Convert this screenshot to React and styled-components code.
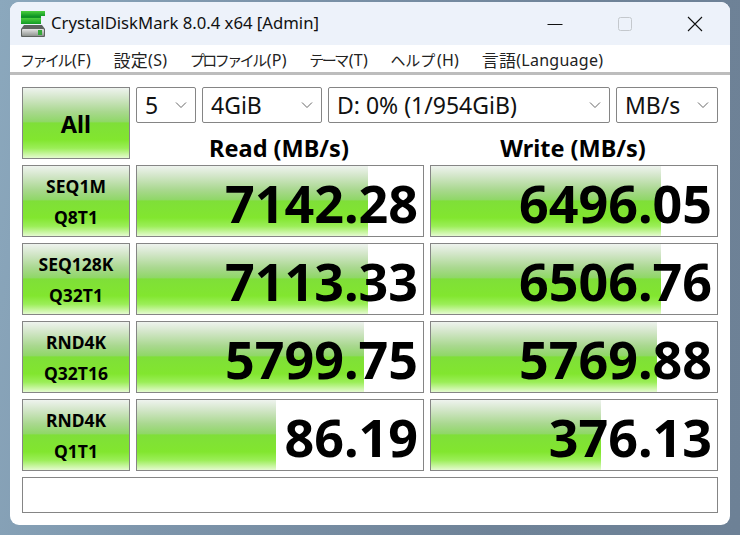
import React from "react";
import styled, { createGlobalStyle } from "styled-components";

const Global = createGlobalStyle`
  html, body { margin: 0; padding: 0; width: 740px; height: 535px; overflow: hidden; }
  body {
    background: linear-gradient(100deg, #8ba8bd 0%, #7d95ab 30%, #6f8398 70%, #6d8196 100%);
    font-family: "Noto Sans", "Noto Sans CJK JP", sans-serif;
  }
`;

const Desktop = styled.div`
  width: 740px;
  height: 535px;
  padding: 2px 10px 0;
  box-sizing: border-box;
`;
const Win = styled.div`
  width: 720px;
  height: 523px;
  background: #fff;
  border-radius: 9px;
  overflow: hidden;
  display: flex;
  flex-direction: column;
`;
const TitleBar = styled.div`
  height: 43px;
  background: #edf2fa;
  display: flex;
  align-items: center;
  padding-left: 11px;
  flex: none;
`;
const Title = styled.div`
  font-size: 16.7px;
  color: #111;
  margin-left: 6px;
  flex: 1;
  white-space: nowrap;
  position: relative;
  top: -1px;
`;
const WinBtn = styled.div`
  width: 70px;
  height: 43px;
  display: flex;
  align-items: center;
  justify-content: center;
  flex: none;
`;
const Menu = styled.div`
  height: 30px;
  background: #fff;
  border-bottom: 3px solid;
  border-image: linear-gradient(#ececec 0 66%, #bdbdbd 66%) 3;
  box-sizing: border-box;
  flex: none;
  display: flex;
  align-items: center;
  padding: 0 0 0 10px;
  color: #222;
  font-size: 16px;
  gap: 22.5px;
`;
const MenuItem = styled.span`
  white-space: nowrap;
  position: relative;
  top: 1px;
  display: flex;
  align-items: center;
  letter-spacing: 0.25px;
`;
const Kana = styled.span`
  font-family: "Noto Sans CJK JP", sans-serif;
  font-size: 15px;
  font-weight: 400;
  letter-spacing: ${(p) => p.$ls}px;
  margin-right: 2px;
`;
const Kanji = styled.span`
  font-family: "Noto Sans CJK JP", sans-serif;
  font-size: 17px;
  font-weight: 400;
  letter-spacing: 0.3px;
`;
const Body = styled.div`
  display: grid;
  grid-template-columns: 108px 288px 288px;
  column-gap: 6px;
  row-gap: 6px;
  padding: 12px 12px 0;
  grid-template-rows: 72px 72px 72px 72px 72px;
`;
const fill = `linear-gradient(180deg,
  #eef3ee 0%, #d3e6c9 14%, #a9d88f 34%, #90d768 48%, #7fdf38 50%, #82e62f 74%, #9bee58 86%, #cbf6a5 95%, #e4fbd0 100%)`;
const AllBtn = styled.div`
  background: ${fill};
  border: 1px solid #858585;
  box-sizing: border-box;
  display: flex;
  align-items: center;
  justify-content: center;
  font-weight: 700;
  font-size: 23.5px;
  color: #000;
  padding-top: 2px;
`;
const TopRight = styled.div`
  grid-column: 2 / 4;
  display: flex;
  flex-direction: column;
`;
const Selects = styled.div`
  display: flex;
  gap: 6px;
  height: 36px;
`;
const Sel = styled.div`
  width: ${(p) => p.$w}px;
  height: 36px;
  box-sizing: border-box;
  border: 1px solid #858585;
  border-radius: 2px;
  background: #fff;
  display: flex;
  align-items: center;
  justify-content: space-between;
  padding: 0 8px;
  font-size: 23px;
  color: #111;
  white-space: nowrap;
`;
const Heads = styled.div`
  display: grid;
  grid-template-columns: 288px 288px;
  column-gap: 6px;
  height: 36px;
`;
const Head = styled.div`
  font-weight: 700;
  font-size: 23.5px;
  color: #000;
  text-align: center;
  line-height: 50px;
  height: 36px;
  white-space: nowrap;
  position: relative;
  left: -1px;
`;
const LabelCell = styled.div`
  background: ${fill};
  border: 1px solid #858585;
  box-sizing: border-box;
  display: flex;
  flex-direction: column;
  align-items: center;
  justify-content: center;
  font-weight: 700;
  font-size: 17.5px;
  line-height: 30.5px;
  color: #000;
  padding-top: 1px;
`;
const Meter = styled.div`
  position: relative;
  border: 1px solid #858585;
  box-sizing: border-box;
  background: #fff;
  display: flex;
  align-items: center;
  justify-content: flex-end;
  padding-right: 5px;
  font-weight: 700;
  font-size: 52px;
  color: #000;
`;
const MeterFill = styled.div`
  position: absolute;
  left: 0;
  top: 0;
  bottom: 0;
  background: ${fill};
`;
const MeterText = styled.span`
  position: relative;
  top: 2px;
  line-height: 70px;
`;
const Comment = styled.div`
  grid-column: 1 / 4;
  height: 36px;
  border: 1px solid #858585;
  box-sizing: border-box;
  background: #fff;
`;

const Chevron = () => (
  <svg width="12" height="8" viewBox="0 0 12 8" fill="none" stroke="#666" strokeWidth="1">
    <path d="M1 1.5 L6 6.5 L11 1.5" />
  </svg>
);

const Logo = () => (
  <svg width="24" height="26" viewBox="0 0 24 26">
    <defs>
      <linearGradient id="g1" x1="0" y1="0" x2="0" y2="1">
        <stop offset="0" stopColor="#4ccf3f" />
        <stop offset="1" stopColor="#129a25" />
      </linearGradient>
      <linearGradient id="g2" x1="0" y1="0" x2="0" y2="1">
        <stop offset="0" stopColor="#e4e4e4" />
        <stop offset="1" stopColor="#8f9490" />
      </linearGradient>
    </defs>
    <rect x="0" y="0" width="24" height="5" fill="url(#g1)" />
    <rect x="0" y="5" width="20" height="2" fill="#119326" />
    <rect x="0" y="7" width="20" height="6" fill="url(#g1)" />
    <path d="M3 14 H21 L24 18 V25 Q24 26 23 26 H1 Q0 26 0 25 V18 Z" fill="#5d625f" />
    <rect x="1" y="18" width="22" height="7" rx="1" fill="url(#g2)" />
    <rect x="17" y="19" width="4" height="5" fill="#35a83a" />
  </svg>
);

const rows = [
  ["SEQ1M", "Q8T1", "7142.28", 231, "6496.05", 230],
  ["SEQ128K", "Q32T1", "7113.33", 231, "6506.76", 230],
  ["RND4K", "Q32T16", "5799.75", 227, "5769.88", 226],
  ["RND4K", "Q1T1", "86.19", 139, "376.13", 170],
];

const menus = [
  { kana: "ファイル", ls: -2.5, rest: "(F)" },
  { kanji: "設定", rest: "(S)" },
  { kana: "プロファイル", ls: -2.5, rest: "(P)" },
  { kana: "テーマ", ls: -2.5, rest: "(T)" },
  { kana: "ヘルプ", ls: -0.2, rest: "(H)" },
  { kanji: "言語", rest: "(Language)" },
];

export default function App() {
  return (
    <>
      <Global />
      <Desktop>
        <Win>
          <TitleBar>
            <Logo />
            <Title>CrystalDiskMark 8.0.4 x64 [Admin]</Title>
            <WinBtn>
              <svg width="16" height="16" viewBox="0 0 16 16"><path d="M0.5 8.5 H15.5" stroke="#111" strokeWidth="1" /></svg>
            </WinBtn>
            <WinBtn>
              <svg width="16" height="16" viewBox="0 0 16 16"><rect x="1.5" y="1.5" width="13" height="13" rx="2" fill="none" stroke="#c4c8cd" strokeWidth="1" /></svg>
            </WinBtn>
            <WinBtn>
              <svg width="16" height="16" viewBox="0 0 16 16"><path d="M1 1 L15 15 M15 1 L1 15" stroke="#111" strokeWidth="1.1" /></svg>
            </WinBtn>
          </TitleBar>
          <Menu>
            {menus.map((m) => (
              <MenuItem key={m.rest}>
                {m.kana && <Kana $ls={m.ls}>{m.kana}</Kana>}
                {m.kanji && <Kanji>{m.kanji}</Kanji>}
                {m.rest}
              </MenuItem>
            ))}
          </Menu>
          <Body>
            <AllBtn>All</AllBtn>
            <TopRight>
              <Selects>
                <Sel $w={60}>5<Chevron /></Sel>
                <Sel $w={120}>4GiB<Chevron /></Sel>
                <Sel $w={282}>D: 0% (1/954GiB)<Chevron /></Sel>
                <Sel $w={102}>MB/s<Chevron /></Sel>
              </Selects>
              <Heads>
                <Head>Read (MB/s)</Head>
                <Head>Write (MB/s)</Head>
              </Heads>
            </TopRight>
            {rows.map((r, i) => (
              <React.Fragment key={i}>
                <LabelCell><span>{r[0]}</span><span>{r[1]}</span></LabelCell>
                <Meter>
                  <MeterFill style={{ width: r[3] }} />
                  <MeterText>{r[2]}</MeterText>
                </Meter>
                <Meter>
                  <MeterFill style={{ width: r[5] }} />
                  <MeterText>{r[4]}</MeterText>
                </Meter>
              </React.Fragment>
            ))}
            <Comment />
          </Body>
        </Win>
      </Desktop>
    </>
  );
}
